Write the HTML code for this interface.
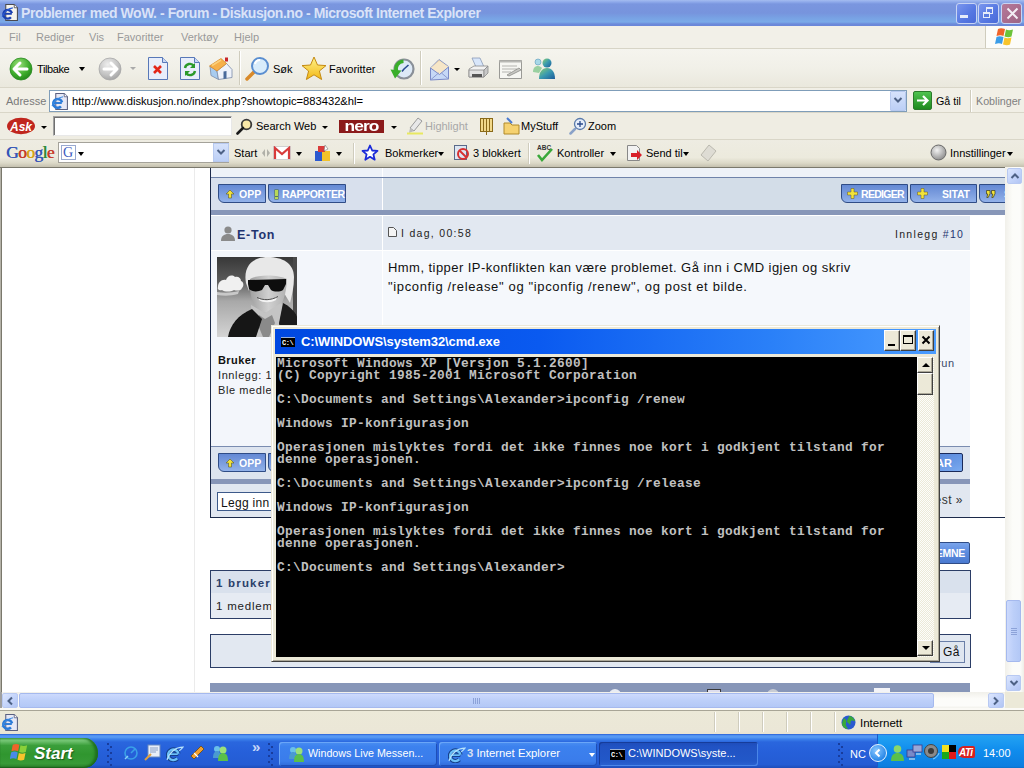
<!DOCTYPE html>
<html><head><meta charset="utf-8">
<style>
*{margin:0;padding:0;box-sizing:border-box}
html,body{width:1024px;height:768px;overflow:hidden;background:#fff;font-family:"Liberation Sans",sans-serif;font-size:11px;color:#000}
.a{position:absolute}
.t{position:absolute;white-space:nowrap;line-height:1}
/* title bar */
#title{left:0;top:0;width:1024px;height:26px;background:linear-gradient(#a4bcf0 0,#8ea9ea 2px,#7a96df 4px,#7794dd 13px,#78a2e4 18px,#7aaae8 22px,#6c8ada 24px,#6a86d8 26px)}
#menu{left:0;top:26px;width:1024px;height:23px;background:#f2f0e8;border-bottom:1px solid #d7d4c6}
#tool{left:0;top:49px;width:1024px;height:39px;background:linear-gradient(#f5f4ee,#f1f0e8 50%,#eae8dd);border-bottom:1px solid #d9d6c8}
#addr{left:0;top:88px;width:1024px;height:25px;background:#f1efe6;border-bottom:1px solid #d9d6c8}
#ask{left:0;top:113px;width:1024px;height:27px;background:#efede3;border-bottom:1px solid #d9d6c8}
#goog{left:0;top:140px;width:1024px;height:27px;background:linear-gradient(#eeece2 0,#eceadd 65%,#dcd9c8 85%,#c4c0ae 100%)}
#page{left:0;top:167px;width:1005px;height:525px;background:#fff;overflow:hidden}
#vs{left:1005px;top:167px;width:19px;height:525px;background:#f5f4ef}
#hs{left:0;top:692px;width:1005px;height:17px;background:#f5f4ef}
#status{left:0;top:709px;width:1024px;height:25px;background:#ece9d8}
#task{left:0;top:734px;width:1024px;height:34px;background:linear-gradient(#3168d5 0,#4993e6 2px,#2157d7 5px,#2663e0 50%,#1941a5 100%)}
#cmd{left:271px;top:325px;width:669px;height:337px;background:#ece9d8}
</style></head><body>
<svg width="0" height="0" style="position:absolute">
 <defs>
  <symbol id="iep" viewBox="0 0 17 17">
   <path d="M4.5 1.5h8l3 3v12h-11z" fill="#f6f4ee" stroke="#4a4a50" stroke-width="1"/>
   <path d="M12.5 1.5v3h3" fill="#fff" stroke="#4a4a50" stroke-width="0.8"/>
   <path d="M2.6 10.2h7.6" stroke="#1a3fb0" stroke-width="1.8"/>
   <path d="M10.3 9.6A4.1 4.1 0 1 0 9.4 13.4" fill="none" stroke="#1a3fb0" stroke-width="2.2"/>
   <path d="M1.2 13.2c1-4 5-8 10-8.6" fill="none" stroke="#2a5ad0" stroke-width="1"/>
  </symbol>
  <symbol id="iea" viewBox="0 0 17 17">
   <path d="M4.5 1.5h8l3 3v12h-11z" fill="#e6e8f6" stroke="#5a6080" stroke-width="1"/>
   <path d="M12.5 1.5v3h3" fill="#fff" stroke="#5a6080" stroke-width="0.8"/>
   <path d="M2.4 10.4h7.8" stroke="#2a7ad8" stroke-width="1.8"/>
   <path d="M10.4 9.8A4.2 4.2 0 1 0 9.4 13.6" fill="none" stroke="#2a7ad8" stroke-width="2.4"/>
   <path d="M1 13.4c1-4 5-8.4 10.4-9" fill="none" stroke="#3a8ae0" stroke-width="1"/>
  </symbol>
  <symbol id="ieb" viewBox="0 0 17 17">
   <path d="M3 9.6h8.6" stroke="#17408a" stroke-width="3.4"/>
   <path d="M11.8 9.2A5 5 0 1 0 10.6 13.6" fill="none" stroke="#17408a" stroke-width="4.2"/>
   <path d="M3.5 9.6h7.6" stroke="#6cc0f8" stroke-width="1.6"/>
   <path d="M11.8 9.2A5 5 0 1 0 10.6 13.6" fill="none" stroke="#6cc0f8" stroke-width="2.2"/>
   <path d="M1 15c2-7 8-12 15-12-1 1-2 2.5-3.5 3.5" fill="none" stroke="#b8e4fc" stroke-width="1.1"/>
  </symbol>
 </defs>
</svg>


<!-- TITLE BAR -->
<div id="title" class="a">
 <svg class="a" style="left:1px;top:3px" width="18" height="18"><use href="#iep"/></svg>
 <div class="t" style="left:21px;top:5px;font:bold 14px 'Liberation Sans',sans-serif;color:#d9e3f8;letter-spacing:-0.45px">Problemer med WoW. - Forum - Diskusjon.no - Microsoft Internet Explorer</div>
 <div class="a tb" style="left:956px;top:3px"><div class="a" style="left:3px;top:11px;width:8px;height:3px;background:#e6ecfa"></div></div>
 <div class="a tb" style="left:978px;top:3px"><div class="a" style="left:7px;top:3px;width:7px;height:7px;border:1px solid #e6ecfa;border-top-width:2px"></div><div class="a" style="left:4px;top:8px;width:7px;height:6px;border:1px solid #e6ecfa;border-top-width:2px;background:#5b7de0"></div></div>
 <div class="a tb" style="left:1001px;top:3px;background:linear-gradient(135deg,#b57a9a,#a86b8c 60%,#9a6785)"><svg class="a" style="left:3px;top:2px" width="15" height="15"><path d="M2.5 2.5L12.5 12.5M12.5 2.5L2.5 12.5" stroke="#f3eef5" stroke-width="2"/></svg></div>
</div>
<style>
.tb{width:21px;height:21px;border:1px solid #c8d4f4;border-radius:3px;background:linear-gradient(135deg,#7a96ee,#5577e2 60%,#4a6ad8)}
.mi{position:absolute;top:32px;color:#999;font-size:11px;line-height:1;white-space:nowrap}
.tl{position:absolute;font-size:11px;line-height:1;white-space:nowrap;color:#000}
.sep{position:absolute;width:2px;border-left:1px solid #cfccbd;border-right:1px solid #fff}
.dd{position:absolute;width:0;height:0;border-left:3px solid transparent;border-right:3px solid transparent;border-top:3px solid #000}
</style>
<!-- MENU -->
<div id="menu" class="a">
 <div class="a" style="left:985px;top:0;width:39px;height:22px;background:#fcfcf9;border-left:1px solid #cfccbd"></div>
 <svg class="a" style="left:995px;top:1px" width="24" height="19" viewBox="0 0 24 19">
  <path d="M3 2c2-1 4-1 7 0l-1.5 7c-2-1-4-1-7 0z" fill="#f0642a"/>
  <path d="M11 2.5c2 1 4 1 7 0l-1.5 7c-2 1-4 1-7 0z" fill="#6cc33a"/>
  <path d="M1.5 10c2-1 4-1 7 0l-1.5 7c-2-1-4-1-7 0z" fill="#3b9de8"/>
  <path d="M9.5 10.5c2 1 4 1 7 0l-1.5 7c-2 1-4 1-7 0z" fill="#f8c42c"/>
 </svg>
</div>
<div class="mi" style="left:9px">Fil</div>
<div class="mi" style="left:36px">Rediger</div>
<div class="mi" style="left:89px">Vis</div>
<div class="mi" style="left:117px">Favoritter</div>
<div class="mi" style="left:181px">Verktøy</div>
<div class="mi" style="left:234px">Hjelp</div>

<!-- TOOLBAR -->
<div id="tool" class="a"></div>
<svg class="a" style="left:9px;top:57px" width="24" height="24" viewBox="0 0 24 24">
 <defs><radialGradient id="gb" cx="0.4" cy="0.3" r="0.8"><stop offset="0" stop-color="#9be07a"/><stop offset="0.6" stop-color="#3cab2a"/><stop offset="1" stop-color="#1d7d17"/></radialGradient>
 <radialGradient id="gg" cx="0.4" cy="0.3" r="0.8"><stop offset="0" stop-color="#eeeeee"/><stop offset="0.6" stop-color="#c2c2c2"/><stop offset="1" stop-color="#9a9a9a"/></radialGradient></defs>
 <circle cx="12" cy="12" r="11" fill="url(#gb)" stroke="#2a8a22" stroke-width="0.8"/>
 <path d="M11 6L5 12l6 6M5.5 12H18" fill="none" stroke="#fff" stroke-width="3" stroke-linecap="round" stroke-linejoin="round"/>
</svg>
<div class="tl" style="left:37px;top:64px;font-size:11px;letter-spacing:-0.4px">Tilbake</div>
<div class="dd" style="left:79px;top:67px;border-width:4px 3.5px 0"></div>
<svg class="a" style="left:98px;top:57px" width="24" height="24" viewBox="0 0 24 24">
 <circle cx="12" cy="12" r="11" fill="url(#gg)" stroke="#a8a8a8" stroke-width="0.8"/>
 <path d="M13 6l6 6-6 6M18.5 12H6" fill="none" stroke="#fff" stroke-width="3" stroke-linecap="round" stroke-linejoin="round"/>
</svg>
<div class="dd" style="left:130px;top:67px;border-top-color:#aaa"></div>
<svg class="a" style="left:147px;top:56px" width="22" height="25" viewBox="0 0 22 25">
 <path d="M1.5 1.5h14l5 5v17h-19z" fill="#e8eefb" stroke="#5878b8"/>
 <path d="M15.5 1.5v5h5" fill="#c8d6f2" stroke="#5878b8"/>
 <path d="M7 10l7 7M14 10l-7 7" stroke="#e32619" stroke-width="2.6"/>
</svg>
<svg class="a" style="left:179px;top:56px" width="22" height="25" viewBox="0 0 22 25">
 <path d="M1.5 1.5h14l5 5v17h-19z" fill="#e8eefb" stroke="#5878b8"/>
 <path d="M15.5 1.5v5h5" fill="#c8d6f2" stroke="#5878b8"/>
 <path d="M6 12a5 5 0 0 1 9-2" fill="none" stroke="#2b9a2b" stroke-width="2.4"/><path d="M16 7v5h-5z" fill="#2b9a2b"/>
 <path d="M16 15a5 5 0 0 1-9 2" fill="none" stroke="#2b9a2b" stroke-width="2.4"/><path d="M6 20v-5h5z" fill="#2b9a2b"/>
</svg>
<svg class="a" style="left:208px;top:56px" width="26" height="25" viewBox="0 0 26 25">
 <path d="M2 10L9 15 10.5 23.5 3 19.5z" fill="#a8ccf0" stroke="#7a8aa8" stroke-width="0.8"/>
 <path d="M9 15L18.5 7.5 24 13.5v8l-13.5 2z" fill="#eef2fa" stroke="#7a8aa8" stroke-width="0.8"/>
 <path d="M1.5 10L13 2.5l5.5 5L9 15z" fill="#f6b04a" stroke="#d88a2a" stroke-width="0.8"/>
 <path d="M4 9.5L13 4" stroke="#fcd07a" stroke-width="1.5"/>
 <path d="M15.5 15.5l3-0.5v7.5l-3 0.5z" fill="#4a6a9a"/>
 <rect x="17" y="1.5" width="3" height="4" fill="#c8262a"/>
</svg>
<div class="sep" style="left:239px;top:51px;height:34px"></div>
<svg class="a" style="left:245px;top:56px" width="26" height="26" viewBox="0 0 26 26">
 <path d="M9 16L2 23" stroke="#d98a2b" stroke-width="3.5" stroke-linecap="round"/>
 <circle cx="15" cy="10" r="8" fill="#d8ecfb" stroke="#5a8ed0" stroke-width="2"/>
 <path d="M10 8a5 5 0 0 1 5-4" fill="none" stroke="#fff" stroke-width="2"/>
</svg>
<div class="tl" style="left:273px;top:64px;font-size:11px">Søk</div>
<svg class="a" style="left:301px;top:56px" width="26" height="25" viewBox="0 0 26 25">
 <defs><linearGradient id="st" x1="0" y1="0" x2="0" y2="1"><stop offset="0" stop-color="#fff38a"/><stop offset="1" stop-color="#f2b715"/></linearGradient></defs>
 <path d="M13 1l3.5 8 8.5.6-6.6 5.4 2.2 8.5L13 18.8 5.4 23.5l2.2-8.5L1 9.6 9.5 9z" fill="url(#st)" stroke="#c48a12" stroke-width="1"/>
</svg>
<div class="tl" style="left:329px;top:64px;font-size:11px">Favoritter</div>
<svg class="a" style="left:389px;top:57px" width="26" height="24" viewBox="0 0 26 24">
 <circle cx="15" cy="12" r="9.5" fill="#dde9f6" stroke="#8a9098" stroke-width="2.2"/>
 <path d="M15 12l4.5-4M15 12l-2 2.5" stroke="#2a4a90" stroke-width="1.6"/>
 <path d="M14.5 4.2A8 8 0 0 0 7.5 15" fill="none" stroke="#3aae2a" stroke-width="3.6"/>
 <path d="M1.5 12.5l11 1-6.5 8z" fill="#3aae2a"/>
</svg>
<div class="sep" style="left:420px;top:51px;height:34px"></div>
<svg class="a" style="left:428px;top:57px" width="24" height="24" viewBox="0 0 24 24">
 <path d="M2.5 11L11 2.5 20.5 9.5" fill="#f8d9a8" stroke="#8a9ac8" stroke-width="1"/>
 <path d="M2.5 11l9-7 9 6v12h-18z" fill="#f6e6c8"/>
 <path d="M2.5 11l9 6.5 9-7.5V22l-18 1z" fill="#c6d8f6" stroke="#7a8ac8" stroke-width="1"/>
 <path d="M2.5 23l8-7M20.5 22l-7-6" stroke="#8a9ad0" stroke-width="1"/>
</svg>
<div class="dd" style="left:454px;top:68px"></div>
<svg class="a" style="left:466px;top:56px" width="26" height="25" viewBox="0 0 26 25">
 <path d="M6 2h8l4 9H10z" fill="#d8e6fa" stroke="#8a9ab8" stroke-width="0.8"/>
 <path d="M3 13l5-3h14l-4 4v7H3z" fill="#f2f2f2" stroke="#8a8a8a" stroke-width="0.8"/>
 <path d="M3 14h15v7H3z" fill="#e2e2e2" stroke="#8a8a8a" stroke-width="0.8"/>
 <path d="M18 14l4-4v7l-4 4z" fill="#c8c8c8" stroke="#8a8a8a" stroke-width="0.8"/>
 <path d="M6 18h10v3H6z" fill="#555"/>
</svg>
<svg class="a" style="left:498px;top:57px" width="26" height="24" viewBox="0 0 26 24">
 <path d="M1.5 3.5h22v18h-22z" fill="#f6f6f2" stroke="#9a9a96"/>
 <path d="M1.5 3.5h22v2h-22z" fill="#b8b8b4"/>
 <path d="M4 9h15M4 12h15M4 15h9" stroke="#b4b4b0"/>
 <path d="M9 18l12-7 2 2-12 6z" fill="#c8c8c4" stroke="#8a8a86" stroke-width="0.8"/>
</svg>
<svg class="a" style="left:531px;top:56px" width="26" height="25" viewBox="0 0 26 25">
 <defs><linearGradient id="msn" x1="0" y1="0" x2="1" y2="1"><stop offset="0" stop-color="#8ad070"/><stop offset="0.5" stop-color="#3a9ab0"/><stop offset="1" stop-color="#1a5a9a"/></linearGradient></defs>
 <circle cx="7" cy="6" r="3" fill="#a8d8e8" stroke="#5a9ab8" stroke-width="0.6"/>
 <path d="M2 16c0-4 2-6 5-6 2 0 3 1 4 2l-3 5z" fill="#9ad0a0"/>
 <circle cx="16" cy="7" r="4.5" fill="url(#msn)"/>
 <path d="M8 23c0-7 3-11 8-11s8 4 8 11z" fill="url(#msn)"/>
</svg>

<!-- ADDRESS -->
<div id="addr" class="a"></div>
<div class="tl" style="left:6px;top:96px;color:#7a7a7a">Adresse</div>
<div class="a" style="left:49px;top:90px;width:858px;height:22px;background:#fff;border:1px solid #7f9db9"></div>
<svg class="a" style="left:51px;top:92px" width="18" height="18"><use href="#iea"/></svg>
<div class="tl" style="left:72px;top:96px;font-size:11.2px">http://www.diskusjon.no/index.php?showtopic=883432&amp;hl=</div>
<div class="a" style="left:890px;top:91px;width:16px;height:20px;background:linear-gradient(#d6e2fb,#bccff6);border:1px solid #b7c9ef;border-radius:1px"></div>
<svg class="a" style="left:893px;top:96px" width="10" height="8"><path d="M1.5 2l3.5 3.5L8.5 2" fill="none" stroke="#4d6185" stroke-width="2"/></svg>
<div class="a" style="left:913px;top:91px;width:19px;height:19px;border-radius:2px;background:linear-gradient(#4fc24f,#1e8a1e);border:1px solid #2a7a2a"></div>
<svg class="a" style="left:915px;top:93px" width="15" height="15"><path d="M2 7.5h10M8 3l4.5 4.5L8 12" fill="none" stroke="#fff" stroke-width="2.2"/></svg>
<div class="tl" style="left:936px;top:96px;font-size:10.7px">Gå til</div>
<div class="sep" style="left:970px;top:90px;height:22px"></div>
<div class="tl" style="left:976px;top:96px;color:#808080;font-size:10.7px">Koblinger</div>

<!-- ASK -->
<div id="ask" class="a"></div>
<svg class="a" style="left:6px;top:117px" width="30" height="18" viewBox="0 0 30 18">
 <ellipse cx="15" cy="9" rx="14" ry="8.2" fill="#c0261e"/>
 <text x="15" y="13.5" text-anchor="middle" font-family="Liberation Sans" font-weight="bold" font-style="italic" font-size="12" fill="#fff">Ask</text>
</svg>
<div class="dd" style="left:41px;top:126px"></div>
<div class="a" style="left:53px;top:116px;width:179px;height:20px;background:#fff;border:1px solid #a0a0a0;border-right-color:#e8e8e8;border-bottom-color:#e8e8e8;box-shadow:inset 1px 1px 0 #707070"></div>
<svg class="a" style="left:236px;top:118px" width="17" height="17" viewBox="0 0 17 17">
 <circle cx="10.5" cy="6.5" r="4.8" fill="#f8e8a8" stroke="#3a3a3a" stroke-width="1.8"/>
 <path d="M7 10l-5.5 5.5" stroke="#1a1a1a" stroke-width="2.6" stroke-linecap="round"/>
</svg>
<div class="tl" style="left:256px;top:121px">Search Web</div>
<div class="dd" style="left:322px;top:126px"></div>
<div class="a" style="left:339px;top:120px;width:45px;height:13px;background:#8b1a1a"></div>
<div class="t" style="left:339px;top:117px;width:45px;text-align:center;font:bold 15.5px 'Liberation Sans',sans-serif;color:#fff;letter-spacing:-0.8px;transform:scaleX(1.12)">nero</div>
<div class="dd" style="left:391px;top:126px"></div>
<svg class="a" style="left:406px;top:117px" width="18" height="18" viewBox="0 0 18 18">
 <path d="M12 1l4 3-8 10-4-3z" fill="#e8e8e8" stroke="#9a9a9a"/>
 <path d="M4 11l4 3-5 2z" fill="#bbb"/>
 <path d="M1 16.5h16" stroke="#e8e860" stroke-width="2"/>
</svg>
<div class="tl" style="left:425px;top:121px;color:#a8a8a8">Highlight</div>
<svg class="a" style="left:479px;top:117px" width="15" height="19" viewBox="0 0 15 19">
 <rect x="1.5" y="1.5" width="12" height="13" fill="#f2d98a" stroke="#8a6a1a"/>
 <path d="M4.5 2v12M7.5 2v12M10.5 2v12" stroke="#8a6a1a"/>
 <path d="M7.5 15v3" stroke="#8a6a1a"/>
</svg>
<svg class="a" style="left:503px;top:117px" width="17" height="18" viewBox="0 0 17 18">
 <path d="M1 6h6l2 2h7v9H1z" fill="#f6d270" stroke="#b08a2a"/>
 <path d="M4 1l5 5" stroke="#4a7ad0" stroke-width="2"/>
</svg>
<div class="tl" style="left:521px;top:121px">MyStuff</div>
<svg class="a" style="left:569px;top:117px" width="18" height="18" viewBox="0 0 18 18">
 <path d="M6 12L1.5 16.5" stroke="#8aa2c8" stroke-width="2.5" stroke-linecap="round"/>
 <circle cx="11" cy="7" r="5.5" fill="#e6eefa" stroke="#5a7aaa" stroke-width="1.3"/>
 <path d="M11 4v6M8 7h6" stroke="#2a4a8a" stroke-width="1.3"/>
</svg>
<div class="tl" style="left:588px;top:121px">Zoom</div>

<!-- GOOGLE -->
<div id="goog" class="a"></div>
<div class="t" style="left:6px;top:142px;font:17.5px 'Liberation Serif',serif;letter-spacing:-0.6px;text-shadow:0.5px 0 0 currentColor"><span style="color:#3556b8">G</span><span style="color:#c63c2c">o</span><span style="color:#d6a418">o</span><span style="color:#3556b8">g</span><span style="color:#2a8a3a">l</span><span style="color:#c63c2c">e</span></div>
<div class="a" style="left:58px;top:142px;width:171px;height:21px;background:#fff;border:1px solid #a4a29a"></div>
<div class="a" style="left:61px;top:145px;width:15px;height:15px;background:#fff;border:1px solid #9aaad0"></div>
<div class="t" style="left:63px;top:145px;font:14px 'Liberation Serif',serif;color:#3a5ac0">G</div>
<div class="dd" style="left:78px;top:152px;border-width:4px 3.5px 0"></div>
<div class="a" style="left:213px;top:143px;width:16px;height:19px;background:linear-gradient(#d6e2fb,#bccff6);border:1px solid #b7c9ef"></div>
<svg class="a" style="left:216px;top:148px" width="10" height="8"><path d="M1.5 2l3.5 3.5L8.5 2" fill="none" stroke="#4d6185" stroke-width="2"/></svg>
<div class="tl" style="left:234px;top:148px">Start</div>
<svg class="a" style="left:261px;top:148px" width="10" height="10"><path d="M4 1L1 5l3 4M6 1l3 4-3 4" fill="#b0b0a8"/></svg>
<svg class="a" style="left:273px;top:146px" width="18" height="14" viewBox="0 0 18 14">
 <rect x="0.5" y="0.5" width="17" height="13" fill="#fff" stroke="#d0d0d0"/>
 <path d="M2 13V2l7 6 7-6v11" fill="none" stroke="#d83b3b" stroke-width="2.2"/>
</svg>
<div class="dd" style="left:296px;top:152px;border-width:4px 3.5px 0"></div>
<svg class="a" style="left:314px;top:144px" width="17" height="18" viewBox="0 0 17 18">
 <rect x="1" y="7" width="7" height="10" fill="#2c5ad0"/><rect x="8" y="7" width="8" height="10" fill="#f2c22a"/>
 <rect x="4" y="2" width="7" height="6" fill="#d83b3b"/><path d="M11 1l3 4-4 2z" fill="#fff" stroke="#777" stroke-width="0.6"/>
</svg>
<div class="dd" style="left:336px;top:152px;border-width:4px 3.5px 0"></div>
<div class="sep" style="left:353px;top:143px;height:21px"></div>
<svg class="a" style="left:361px;top:144px" width="18" height="18" viewBox="0 0 18 18">
 <path d="M9 1.5l2.2 5 5.3.4-4.1 3.5 1.3 5.3L9 12.8l-4.7 2.9 1.3-5.3L1.5 6.9l5.3-.4z" fill="#fff" stroke="#1a2ad8" stroke-width="1.8" stroke-linejoin="round"/>
</svg>
<div class="tl" style="left:385px;top:148px">Bokmerker</div>
<div class="dd" style="left:438px;top:152px;border-width:4px 3.5px 0"></div>
<svg class="a" style="left:453px;top:144px" width="18" height="18" viewBox="0 0 18 18">
 <rect x="1.5" y="1.5" width="12" height="14" fill="#dde6f2" stroke="#5a6a8a"/>
 <circle cx="10" cy="10" r="5" fill="none" stroke="#d83030" stroke-width="2"/><path d="M6.5 6.5l7 7" stroke="#d83030" stroke-width="2"/>
</svg>
<div class="tl" style="left:473px;top:148px">3 blokkert</div>
<div class="sep" style="left:528px;top:143px;height:21px"></div>
<svg class="a" style="left:536px;top:143px" width="18" height="19" viewBox="0 0 18 19">
 <text x="1" y="7" font-family="Liberation Sans" font-size="6.5" font-weight="bold" fill="#333">ABC</text>
 <path d="M2 12l4 5 10-11" fill="none" stroke="#3aa83a" stroke-width="2.6"/>
</svg>
<div class="tl" style="left:557px;top:148px">Kontroller</div>
<div class="dd" style="left:610px;top:152px;border-width:4px 3.5px 0"></div>
<svg class="a" style="left:626px;top:144px" width="18" height="18" viewBox="0 0 18 18">
 <path d="M1.5 1.5h9l3 3v12h-12z" fill="#f2f2f2" stroke="#888"/>
 <path d="M5 9h6V6l5 5-5 5v-3H5z" fill="#d8202a"/>
</svg>
<div class="tl" style="left:646px;top:148px">Send til</div>
<div class="dd" style="left:683px;top:152px;border-width:4px 3.5px 0"></div>
<svg class="a" style="left:700px;top:144px" width="17" height="18" viewBox="0 0 17 18">
 <path d="M9 1l7 6-8 10-7-6z" fill="#dedcd4" stroke="#bab8ae"/>
</svg>
<svg class="a" style="left:930px;top:144px" width="17" height="17" viewBox="0 0 17 17">
 <defs><radialGradient id="gr" cx="0.4" cy="0.35" r="0.7"><stop offset="0" stop-color="#f2f2f2"/><stop offset="1" stop-color="#8a8a8a"/></radialGradient></defs>
 <circle cx="8.5" cy="8.5" r="7.5" fill="url(#gr)" stroke="#6a6a6a"/>
</svg>
<div class="tl" style="left:950px;top:148px">Innstillinger</div>
<div class="dd" style="left:1007px;top:152px;border-width:4px 3.5px 0"></div>

<!-- PAGE -->
<style>
.pg{position:absolute;left:0;top:167px;width:1005px;height:525px;overflow:hidden;background:#fff}
.p{position:absolute}
.btn{position:absolute;height:19px;border:1px solid #2f4c86;border-radius:0 0 0 6px;background:linear-gradient(#6489d4,#7fa0e0 60%,#92b2ea);color:#fff;font:bold 10.5px 'Liberation Sans',sans-serif;line-height:19px;white-space:nowrap}
.btn2{position:absolute;height:19px;border:1px solid #2f4c86;border-radius:2px;background:linear-gradient(#7aa4ec,#5a8ade 50%,#4a7ad0);color:#fff;font:bold 10px 'Liberation Sans',sans-serif;line-height:17px;white-space:nowrap}
.vt{position:absolute;font-size:11px;line-height:1;white-space:nowrap;letter-spacing:0.6px;color:#222}
</style>
<div class="pg">
 <div class="p" style="left:0;top:0;width:1005px;height:1px;background:#7a786c;z-index:5"></div>
 <div class="p" style="left:0;top:0;width:1px;height:525px;background:#b4b2a8"></div><div class="p" style="left:1px;top:0;width:1px;height:525px;background:#7a786c"></div>
 <div class="p" style="left:194px;top:0;width:1px;height:525px;background:#ebebeb"></div>
 <!-- top row -->
 <div class="p" style="left:210px;top:0;width:795px;height:350px;background:#fff"></div>
 <div class="p" style="left:210px;top:0;width:1px;height:350px;background:#1c2a4a"></div>
 <div class="p" style="left:211px;top:0;width:794px;height:10px;background:#eef2f8"></div>
 <div class="p" style="left:382px;top:0;width:1px;height:43px;background:#fff"></div>
 <div class="p" style="left:211px;top:10px;width:794px;height:1px;background:#6f83aa"></div>
 <div class="p" style="left:211px;top:11px;width:171px;height:32px;background:#d8e0ed"></div>
 <div class="p" style="left:383px;top:11px;width:622px;height:32px;background:#d3dde8"></div>
 <div class="p" style="left:211px;top:43px;width:794px;height:5px;background:#8796b8"></div>
 <div class="btn" style="left:218px;top:17px;width:48px;padding-left:20px">OPP</div>
 <svg class="p" style="left:225px;top:22px" width="10" height="10"><path d="M5 1L1 5h2.5v4h3V5H9z" fill="#f2e23a" stroke="#5a5a2a" stroke-width="0.6"/></svg>
 <div class="btn" style="left:268px;top:17px;width:78px;padding-left:13px;letter-spacing:-0.35px">RAPPORTER</div>
 <div class="p" style="left:275px;top:23px;width:3px;height:6px;background:#b8d858;box-shadow:0 0 0 0.5px #4a6a3a"></div><div class="p" style="left:275px;top:30px;width:3px;height:2px;background:#b8d858;box-shadow:0 0 0 0.5px #4a6a3a"></div>
 <div class="btn" style="left:841px;top:17px;width:67px;padding-left:19px;letter-spacing:-0.7px">REDIGER</div>
 <svg class="p" style="left:847px;top:21px" width="11" height="11"><path d="M4 0.5h3v3.5h3.5v3H7v3.5H4V7H0.5V4H4z" fill="#f2e23a" stroke="#6a5a1a" stroke-width="0.5"/></svg>
 <div class="btn" style="left:910px;top:17px;width:67px;padding-left:31px;letter-spacing:-0.2px">SITAT</div>
 <svg class="p" style="left:917px;top:21px" width="11" height="11"><path d="M4 0.5h3v3.5h3.5v3H7v3.5H4V7H0.5V4H4z" fill="#f2e23a" stroke="#6a5a1a" stroke-width="0.5"/></svg>
 <div class="btn" style="left:979px;top:17px;width:60px;padding-left:24px">SVAR</div>
 <svg class="p" style="left:986px;top:23px" width="10" height="8" viewBox="0 0 10 8"><path d="M0.5 0.5h3.5v3.2L2.2 7.5H0.8L1.8 4H0.5zM5.5 0.5H9v3.2L7.2 7.5H5.8L6.8 4H5.5z" fill="#f2e23a" stroke="#3a3a1a" stroke-width="0.7"/></svg>
 <!-- post header -->
 <div class="p" style="left:211px;top:48px;width:794px;height:1px;background:#fff"></div>
 <div class="p" style="left:211px;top:49px;width:171px;height:34px;background:#e2e8f1"></div>
 <div class="p" style="left:383px;top:49px;width:587px;height:34px;background:#e2e8f1"></div>
 <svg class="p" style="left:220px;top:58px" width="16" height="17" viewBox="0 0 16 17"><circle cx="8" cy="5" r="3.6" fill="#8a8a8a"/><path d="M1 16c0-5 3-7 7-7s7 2 7 7z" fill="#8a8a8a"/></svg>
 <div class="t" style="left:237px;top:61px;font:bold 12.5px 'Liberation Sans',sans-serif;letter-spacing:0.75px;color:#1f3470">E-Ton</div>
 <svg class="p" style="left:388px;top:60px" width="9" height="10"><path d="M0.5 0.5h5l3 3v6h-8z" fill="#f4f4f4" stroke="#555" stroke-width="1"/></svg>
 <div class="vt" style="left:401px;top:61px;font-size:10.5px;letter-spacing:1.3px;color:#222">I dag, 00:58</div>
 <div class="vt" style="left:895px;top:62px;font-size:10.5px;letter-spacing:1.3px;color:#222">Innlegg <span style="color:#1f3470">#10</span></div>
 <!-- post body -->
 <div class="p" style="left:211px;top:83px;width:794px;height:1px;background:#fff"></div>
 <div class="p" style="left:211px;top:84px;width:171px;height:195px;background:#f3f6fb"></div>
 <div class="p" style="left:383px;top:84px;width:587px;height:195px;background:#f5f8fc"></div>
   <svg class="p" style="left:217px;top:90px" width="80" height="80" viewBox="0 0 80 80">
  <defs>
   <linearGradient id="sky" x1="0" y1="0" x2="0" y2="1"><stop offset="0" stop-color="#383838"/><stop offset="0.3" stop-color="#5a5a5a"/><stop offset="0.55" stop-color="#a8a8a8"/><stop offset="1" stop-color="#d4d4d4"/></linearGradient>
   <linearGradient id="face" x1="0" y1="0" x2="1" y2="0"><stop offset="0" stop-color="#a0a0a0"/><stop offset="0.5" stop-color="#d0d0d0"/><stop offset="1" stop-color="#b0b0b0"/></linearGradient>
   <filter id="bl" x="-10%" y="-10%" width="120%" height="120%"><feGaussianBlur stdDeviation="0.7"/></filter>
   <clipPath id="av"><rect width="80" height="80"/></clipPath>
  </defs>
  <g clip-path="url(#av)">
  <rect width="80" height="80" fill="url(#sky)"/>
  <g filter="url(#bl)">
  <path d="M76 0h4v60h-4z" fill="#4a4a4a"/>
  <path d="M1 30c0-5 4-8 8-7 1-4 6-6 9-3 3-1 6 1 6 4 3 1 3 5 1 7-1 3-5 3-8 2-4 2-9 2-12 0-3 1-5-1-4-3z" fill="#f0f0f0"/>
  <path d="M0 35c6 1 14 1 22-1l-1 3c-7 2-14 2-21 1z" fill="#c8c8c8"/>
  <path d="M29 26c-3-16 6-26 22-26 14 0 26 6 26 20 0 10-2 18-4 26l-6-10c0-10-6-14-18-14s-16 4-17 12z" fill="#e8e8e8"/>
  <path d="M33 22c-1 20 4 33 17 34 13-1 19-13 20-34-8-4-28-5-37 0z" fill="url(#face)"/>
  <path d="M31 23l38-1v5l-3 6c-3 2-9 2-12 0l-3-5h-3l-3 5c-4 2-10 2-13-1l-1-5z" fill="#0c0c0c"/>
  <path d="M41 41c5 3 13 3 19-1l-1 3c-5 3-13 3-17 0z" fill="#f4f4f4"/>
  <path d="M40 40.5c6 3 14 3 21-1" stroke="#505050" stroke-width="1" fill="none"/>
  <path d="M34 48l14 8 16-10 10 8 2 26H36z" fill="#c4c4c4"/>
  <path d="M42 58l6 4 7-4 3 8-6 14h-6l-5-12z" fill="#8a8a8a"/>
  <path d="M11 80c2-12 10-22 24-28l10 10-6 18z" fill="#121212"/>
  <path d="M66 46c6 3 12 8 14 14v20H64l-2-14z" fill="#1a1a1a"/>
  </g>
  </g>
 </svg>
 <div class="t" style="left:388px;top:94px;font-size:13px;letter-spacing:0.45px;color:#111">Hmm, tipper IP-konflikten kan være problemet. Gå inn i CMD igjen og skriv</div>
 <div class="t" style="left:388px;top:113px;font-size:13px;letter-spacing:0.65px;color:#111">"ipconfig /release" og "ipconfig /renew", og post et bilde.</div>
 <div class="t" style="left:218px;top:187px;font:bold 11px 'Liberation Sans',sans-serif;letter-spacing:0.4px;color:#111">Bruker</div>
 <div class="vt" style="left:218px;top:203px">Innlegg: 1</div>
 <div class="vt" style="left:218px;top:218px">Ble medlem: 01.01.08</div>
 <div class="vt" style="left:931px;top:191px;color:#3a4a6a">yrun</div>
 <!-- bottom button row -->
 <div class="p" style="left:211px;top:279px;width:759px;height:1px;background:#7a8cb0"></div>
 <div class="p" style="left:211px;top:280px;width:759px;height:32px;background:#dde4ef"></div>
 <div class="btn" style="left:218px;top:286px;width:48px;padding-left:20px">OPP</div>
 <svg class="p" style="left:225px;top:291px" width="10" height="10"><path d="M5 1L1 5h2.5v4h3V5H9z" fill="#f2e23a" stroke="#5a5a2a" stroke-width="0.6"/></svg>
 <div class="btn" style="left:268px;top:286px;width:60px"></div>
 <div class="btn2" style="left:900px;top:286px;width:63px;padding-right:10px;text-align:right;font-size:11px;line-height:19px;border-color:#1a2a5a;background:linear-gradient(160deg,#4a78d0,#6a9ae6 70%,#7aaaf0)">SVAR</div>
 <div class="p" style="left:211px;top:312px;width:759px;height:5px;background:#8796b8"></div>
 <div class="p" style="left:211px;top:317px;width:759px;height:33px;background:#e1e7f0"></div>
 <div class="p" style="left:217px;top:325px;width:120px;height:19px;background:#fff;border:1px solid #3d5a8a"></div>
 <div class="vt" style="left:221px;top:330px;font-size:12px;letter-spacing:0.3px;color:#111">Legg inn</div>
 <div class="vt" style="left:763px;top:327px;width:200px;text-align:right;font-size:12px;letter-spacing:0.5px;color:#333">Eldre emne · Nyest »</div>
 <div class="p" style="left:210px;top:350px;width:795px;height:1px;background:#1c2a4a"></div>
 <!-- EMNE -->
 <div class="btn2" style="left:870px;top:375px;width:100px;height:22px;line-height:20px;padding-right:4px;text-align:right;font-size:10.5px;letter-spacing:-0.3px">NYTT EMNE</div>
 <!-- online box -->
 <div class="p" style="left:210px;top:403px;width:761px;height:49px;border:1px solid #2b3d66;background:#e6ebf3"></div>
 <div class="p" style="left:211px;top:404px;width:759px;height:22px;background:#d9e1ed"></div>
 <div class="t" style="left:216px;top:410px;font:bold 11.5px 'Liberation Sans',sans-serif;letter-spacing:1.2px;color:#2b3f6a">1 bruker leser dette emnet</div>
 <div class="vt" style="left:216px;top:434px;font-size:11.5px;letter-spacing:0.8px">1 medlem</div>
 <!-- go box -->
 <div class="p" style="left:210px;top:467px;width:761px;height:34px;border:1px solid #2b3d66;background:#e2e8f1"></div>
 <div class="p" style="left:930px;top:474px;width:35px;height:22px;border:1px solid #6a7fa8;background:#dfe6f0"></div>
 <div class="vt" style="left:943px;top:479px;font-size:12px;letter-spacing:0.5px;color:#111">Gå</div>
 <!-- bottom bar -->
 <div class="p" style="left:210px;top:516px;width:760px;height:9px;background:#8796b8"></div>
 <div class="p" style="left:609px;top:522px;width:12px;height:6px;border-radius:6px 6px 0 0;background:#e8ecf4"></div>
 <div class="p" style="left:707px;top:522px;width:14px;height:4px;border:1px solid #3a3a3a;border-bottom:none;background:#dde"></div>
 <div class="p" style="left:767px;top:522px;width:12px;height:6px;border-radius:6px 6px 0 0;background:#c8ccd4"></div>
 <div class="p" style="left:874px;top:521px;width:16px;height:4px;background:#f4f4f8"></div>
</div>

<!-- V SCROLL -->
<style>
.sbb{position:absolute;width:15px;height:16px;border:1px solid #b8c9f2;border-radius:2px;background:linear-gradient(135deg,#dce6fd,#c5d5fb 50%,#b2c5f3)}
.sbh{position:absolute;border:1px solid #a5b9ee;border-radius:2px;background:linear-gradient(90deg,#cddafd,#bccff9 50%,#b3c8f6)}
</style>
<div class="a" style="left:1005px;top:167px;width:19px;height:525px;background:linear-gradient(90deg,#f1f0ea,#fcfcf9 40%,#fcfcfa 80%,#eeede6)"></div>
<div class="sbb" style="left:1007px;top:168px"></div>
<svg class="a" style="left:1010px;top:172px" width="10" height="8"><path d="M1.5 6L5 2.5 8.5 6" fill="none" stroke="#4d6185" stroke-width="2"/></svg>
<div class="sbh" style="left:1006px;top:600px;width:15px;height:62px;background:linear-gradient(90deg,#cddafd,#bccff9 50%,#b3c8f6)"></div>
<svg class="a" style="left:1010px;top:627px" width="8" height="8"><path d="M1 1.5h6M1 3.5h6M1 5.5h6M1 7.5h6" stroke="#8ca2d8" stroke-width="1"/></svg>
<div class="sbb" style="left:1006px;top:675px"></div>
<svg class="a" style="left:1009px;top:679px" width="10" height="8"><path d="M1.5 2L5 5.5 8.5 2" fill="none" stroke="#4d6185" stroke-width="2"/></svg>
<!-- H SCROLL -->
<div class="a" style="left:0;top:692px;width:1024px;height:17px;background:linear-gradient(#f1f0ea,#fcfcf9 40%,#fcfcfa 80%,#eeede6)"></div>
<div class="a" style="left:0;top:692px;width:2px;height:17px;background:#a0a0a0"></div>
<div class="a" style="left:1005px;top:692px;width:19px;height:17px;background:#ece9d8"></div>
<div class="sbb" style="left:2px;top:693px;width:16px;height:15px"></div>
<svg class="a" style="left:6px;top:696px" width="8" height="10"><path d="M6 1.5L2.5 5 6 8.5" fill="none" stroke="#4d6185" stroke-width="2"/></svg>
<div class="sbh" style="left:19px;top:693px;width:915px;height:15px;background:linear-gradient(#cddafd,#bccff9 50%,#b3c8f6)"></div>
<svg class="a" style="left:472px;top:697px" width="8" height="8"><path d="M1.5 1v6M3.5 1v6M5.5 1v6M7.5 1v6" stroke="#8ca2d8" stroke-width="1"/></svg>
<div class="sbb" style="left:988px;top:693px;width:16px;height:15px"></div>
<svg class="a" style="left:992px;top:696px" width="8" height="10"><path d="M2 1.5L5.5 5 2 8.5" fill="none" stroke="#4d6185" stroke-width="2"/></svg>
<!-- STATUS -->
<div class="a" style="left:0;top:708px;width:1024px;height:2px;background:#fbfaf6"></div>
<div class="a" style="left:0;top:710px;width:1024px;height:1px;background:#a8a596"></div>
<div class="a" style="left:0;top:711px;width:1024px;height:23px;background:linear-gradient(#ece9d8,#ebe7d7 80%,#e8e3d2)"></div>
<svg class="a" style="left:1px;top:713px" width="18" height="18"><use href="#iea"/></svg>
<div class="sep" style="left:714px;top:712px;height:20px"></div>
<div class="sep" style="left:738px;top:712px;height:20px"></div>
<div class="sep" style="left:762px;top:712px;height:20px"></div>
<div class="sep" style="left:786px;top:712px;height:20px"></div>
<div class="sep" style="left:810px;top:712px;height:20px"></div>
<div class="sep" style="left:834px;top:712px;height:20px"></div>
<svg class="a" style="left:841px;top:715px" width="15" height="15" viewBox="0 0 15 15">
 <circle cx="7.5" cy="7.5" r="7" fill="#2a5ad0"/>
 <path d="M3 3c2 1 3 3 2 5s1 4 2 6c-3 0-5-2-6-4 0-3 1-5 2-7zM8 1c3 0 5 2 6 5-2 0-3-1-4 0s0 3-1 4c-1-2-3-2-3-4s2-3 2-5z" fill="#3aa83a"/>
</svg>
<div class="tl" style="left:860px;top:718px;font-size:11.5px">Internett</div>

<!-- TASKBAR -->
<div class="a" style="left:0;top:734px;width:1024px;height:34px;background:linear-gradient(#1f50c8 0,#4a8cf0 1px,#5a9cf4 3px,#3c82ec 5px,#2a66de 8px,#2660da 50%,#245cd4 90%,#1e4cb8 100%)"></div>
<div class="a" style="left:0;top:738px;width:98px;height:30px;border-radius:0 14px 14px 0/0 15px 15px 0;background:linear-gradient(#5ab85a 0,#78c878 8%,#3a9e3a 25%,#30962f 55%,#379a37 85%,#2a7e2a 100%);box-shadow:inset -3px 0 3px #1e6e1e,inset 0 -1px 1px #1a5a1a"></div>
<svg class="a" style="left:10px;top:743px" width="21" height="20" viewBox="0 0 19 18">
 <path d="M2.5 1.5c2-1 4-1 6 0l-1.2 6c-2-1-4-1-6 0z" fill="#f0642a"/>
 <path d="M9.5 2c2 1 4 1 6 0l-1.2 6c-2 1-4 1-6 0z" fill="#8ad03a"/>
 <path d="M1 8.5c2-1 4-1 6 0l-1.2 6c-2-1-4-1-6 0z" fill="#4a8ae8"/>
 <path d="M8 9c2 1 4 1 6 0l-1.2 6c-2 1-4 1-6 0z" fill="#f8c42c"/>
</svg>
<div class="t" style="left:34px;top:744px;font:bold italic 17px 'Liberation Sans',sans-serif;color:#fff;text-shadow:1px 1px 1px #1a5a1a">Start</div>
<svg class="a" style="left:107px;top:741px" width="6" height="26"><g fill="#183c9c"><rect x="0" y="2" width="2" height="2"/><rect x="3" y="5" width="2" height="2"/><rect x="0" y="8" width="2" height="2"/><rect x="3" y="11" width="2" height="2"/><rect x="0" y="14" width="2" height="2"/><rect x="3" y="17" width="2" height="2"/><rect x="0" y="20" width="2" height="2"/><rect x="3" y="23" width="2" height="2"/></g></svg>
<!-- quick launch -->
<svg class="a" style="left:123px;top:745px" width="16" height="16" viewBox="0 0 16 16"><circle cx="8" cy="8" r="6" fill="none" stroke="#3aa0e8" stroke-width="1.6"/><path d="M8 8l4-4" stroke="#3aa0e8" stroke-width="1.6"/><path d="M2 14l3-3" stroke="#8ad0f8" stroke-width="1.5"/></svg>
<svg class="a" style="left:144px;top:744px" width="17" height="17" viewBox="0 0 17 17"><rect x="4" y="1" width="12" height="12" fill="#e8eef8" stroke="#6a8ac0"/><path d="M6 4h8M6 6h8M6 8h6" stroke="#8aa0c8"/><path d="M1 16l6-6" stroke="#e0a040" stroke-width="2"/></svg>
<svg class="a" style="left:166px;top:744px" width="18" height="18"><use href="#ieb"/></svg>
<svg class="a" style="left:189px;top:744px" width="17" height="17" viewBox="0 0 17 17"><path d="M2 12L12 2l3 3L5 15z" fill="#f0a030" stroke="#6a4a10" stroke-width="0.8"/><path d="M5 9l4 4" stroke="#fff" stroke-width="1.2"/></svg>
<svg class="a" style="left:212px;top:744px" width="17" height="17" viewBox="0 0 17 17"><circle cx="5" cy="5" r="3" fill="#6ac0ea"/><path d="M1 14c0-5 2-7 4-7s4 2 4 7z" fill="#4a9ad0"/><circle cx="11" cy="6" r="3.5" fill="#9ae07a"/><path d="M6 17c0-6 2-8 5-8s5 2 5 8z" fill="#5ac04a"/></svg>
<div class="t" style="left:252px;top:738px;font:bold 15px 'Liberation Sans',sans-serif;color:#c8d8f8;letter-spacing:-1px">»</div>
<svg class="a" style="left:268px;top:741px" width="6" height="26"><g fill="#183c9c"><rect x="0" y="2" width="2" height="2"/><rect x="3" y="5" width="2" height="2"/><rect x="0" y="8" width="2" height="2"/><rect x="3" y="11" width="2" height="2"/><rect x="0" y="14" width="2" height="2"/><rect x="3" y="17" width="2" height="2"/><rect x="0" y="20" width="2" height="2"/><rect x="3" y="23" width="2" height="2"/></g></svg>
<!-- task buttons -->
<div class="a" style="left:279px;top:742px;width:158px;height:24px;border-radius:3px;background:linear-gradient(#4a8ef2,#3c81ee 20%,#3a7ceb 80%,#2f6ad8);box-shadow:inset 1px 1px 0 #6aa6f8,inset -1px -1px 0 #1f4fb8"></div>
<svg class="a" style="left:288px;top:745px" width="17" height="17" viewBox="0 0 17 17"><circle cx="5" cy="5" r="3" fill="#6ac0ea"/><path d="M1 14c0-5 2-7 4-7s4 2 4 7z" fill="#4a9ad0"/><circle cx="11" cy="6" r="3.5" fill="#9ae07a"/><path d="M6 17c0-6 2-8 5-8s5 2 5 8z" fill="#5ac04a"/></svg>
<div class="t" style="left:308px;top:748px;font-size:10.7px;color:#fff">Windows Live Messen...</div>
<div class="a" style="left:439px;top:742px;width:158px;height:24px;border-radius:3px;background:linear-gradient(#4a8ef2,#3c81ee 20%,#3a7ceb 80%,#2f6ad8);box-shadow:inset 1px 1px 0 #6aa6f8,inset -1px -1px 0 #1f4fb8"></div>
<svg class="a" style="left:448px;top:745px" width="18" height="18"><use href="#ieb"/></svg>
<div class="t" style="left:467px;top:748px;font-size:11.3px;color:#fff"><b style="color:#d8e0f0">3</b> Internet Explorer</div>
<div class="a" style="left:589px;top:753px;width:0;height:0;border-left:3.5px solid transparent;border-right:3.5px solid transparent;border-top:4px solid #fff"></div>
<div class="a" style="left:599px;top:742px;width:159px;height:24px;border-radius:3px;background:linear-gradient(#1e4cb8,#2153c4 20%,#2258c8 80%,#2a62d2);box-shadow:inset 1px 1px 0 #163c9a,inset -1px -1px 0 #4a86e8"></div>
<div class="a" style="left:610px;top:749px;width:15px;height:11px;background:#000;border-top:1px solid #9ab0d8"></div>
<div class="t" style="left:611px;top:751px;font:bold 7px 'Liberation Mono',monospace;color:#fff;letter-spacing:-0.5px">C:\</div>
<div class="t" style="left:628px;top:748px;font-size:11px;color:#fff">C:\WINDOWS\syste...</div>
<!-- tray -->
<svg class="a" style="left:838px;top:741px" width="6" height="26"><g fill="#183c9c"><rect x="0" y="2" width="2" height="2"/><rect x="3" y="5" width="2" height="2"/><rect x="0" y="8" width="2" height="2"/><rect x="3" y="11" width="2" height="2"/><rect x="0" y="14" width="2" height="2"/><rect x="3" y="17" width="2" height="2"/><rect x="0" y="20" width="2" height="2"/><rect x="3" y="23" width="2" height="2"/></g></svg>
<div class="t" style="left:850px;top:749px;font-size:11px;color:#fff">NC</div>
<div class="a" style="left:877px;top:734px;width:147px;height:34px;background:linear-gradient(#1c5ad8 0,#2e9aef 1px,#21a0f2 3px,#0f8ced 50%,#0d7ee0 95%,#0b6fc8 100%);border-left:1px solid #1a5ac8"></div>
<div class="a" style="left:869px;top:744px;width:18px;height:18px;border-radius:50%;background:radial-gradient(circle at 40% 35%,#8ac8ff,#2a88e8 70%,#1a6ad0);border:1px solid #e8f4ff"></div>
<svg class="a" style="left:873px;top:748px" width="10" height="10"><path d="M6.5 1.5L3 5l3.5 3.5" fill="none" stroke="#fff" stroke-width="2"/></svg>
<svg class="a" style="left:890px;top:744px" width="15" height="18" viewBox="0 0 15 18"><circle cx="7.5" cy="5" r="3.8" fill="#8ad86a"/><path d="M1 17c0-6 3-8 6.5-8S14 11 14 17z" fill="#5ac04a"/></svg>
<svg class="a" style="left:906px;top:744px" width="17" height="17" viewBox="0 0 17 17"><rect x="1" y="6" width="8" height="7" fill="#7a8ac8" stroke="#3a3a8a" stroke-width="0.8"/><rect x="7" y="1" width="9" height="7" fill="#9aa8d8" stroke="#3a3a8a" stroke-width="0.8"/><path d="M3 15h6M10 10h5" stroke="#eee" stroke-width="1.2"/></svg>
<svg class="a" style="left:923px;top:743px" width="18" height="18" viewBox="0 0 18 18"><circle cx="8" cy="8" r="6.5" fill="#8a8a8a" stroke="#444"/><circle cx="8" cy="8" r="3" fill="#3a3a3a"/><path d="M10 16c3-1 5-3 6-6" stroke="#8ad0f8" stroke-width="1" fill="none"/></svg>
<div class="a" style="left:942px;top:745px;width:7px;height:7px;background:#f0e020"></div>
<div class="a" style="left:949px;top:745px;width:7px;height:7px;background:#000"></div>
<div class="a" style="left:942px;top:752px;width:7px;height:7px;background:#1aa81a"></div>
<div class="a" style="left:949px;top:752px;width:7px;height:7px;background:#e01a1a"></div>
<div class="a" style="left:958px;top:746px;width:17px;height:12px;border-radius:6px 2px 2px 6px;background:#d82020"></div>
<div class="t" style="left:959px;top:747px;font:bold italic 10px 'Liberation Sans',sans-serif;color:#fff;letter-spacing:-0.6px">ATi</div>
<div class="t" style="left:983px;top:748px;font-size:11px;color:#fff">14:00</div>

<!-- CMD -->
<style>
.cb{position:absolute;width:16px;height:21px;background:#ece9d8;border:1px solid;border-color:#fff #404040 #404040 #fff;box-shadow:inset -1px -1px 0 #aca899}
.con{position:absolute;left:277px;top:358px;font:bold 12.8px 'Liberation Mono',monospace;letter-spacing:0.32px;line-height:12px;color:#c0c0c0;white-space:pre}
</style>
<div class="a" style="left:271px;top:325px;width:669px;height:337px;background:#ece9d8;border:1px solid;border-color:#ece9d8 #404040 #404040 #ece9d8;box-shadow:inset 1px 1px 0 #fff,inset -1px -1px 0 #aca899"></div>
<div class="a" style="left:275px;top:329px;width:661px;height:25px;background:linear-gradient(90deg,#0048e0,#0a5af0 40%,#2a80f8 75%,#4a9cff)"></div>
<div class="a" style="left:281px;top:337px;width:14px;height:10px;background:#000;border-top:1px solid #9ab0d8"></div>
<div class="t" style="left:282px;top:339px;font:bold 7px 'Liberation Mono',monospace;color:#fff;letter-spacing:-0.5px">C:\</div>
<div class="t" style="left:301px;top:334px;font:bold 13px 'Liberation Sans',sans-serif;color:#fff;letter-spacing:-0.1px">C:\WINDOWS\system32\cmd.exe</div>
<div class="cb" style="left:884px;top:330px"><div class="a" style="left:3px;top:13px;width:7px;height:2px;background:#000"></div></div>
<div class="cb" style="left:900px;top:330px"><div class="a" style="left:2px;top:4px;width:10px;height:9px;border:1px solid #000;border-top-width:2px"></div></div>
<div class="cb" style="left:918px;top:330px;width:16px"><svg class="a" style="left:2px;top:4px" width="10" height="10"><path d="M1.5 1.5l7 7M8.5 1.5l-7 7" stroke="#000" stroke-width="2"/></svg></div>
<div class="a" style="left:276px;top:357px;width:641px;height:300px;background:#000"></div>
<div class="a" style="left:917px;top:357px;width:17px;height:300px;background:repeating-conic-gradient(#ece9d8 0 25%,#fdfdfb 0 50%) 0 0/2px 2px"></div>
<div class="cb" style="left:917px;top:357px;height:16px"><div class="a" style="left:4px;top:5px;width:0;height:0;border-left:4px solid transparent;border-right:4px solid transparent;border-bottom:4px solid #000"></div></div>
<div class="cb" style="left:917px;top:373px;height:22px"></div>
<div class="cb" style="left:917px;top:640px;height:16px"><div class="a" style="left:4px;top:5px;width:0;height:0;border-left:4px solid transparent;border-right:4px solid transparent;border-top:4px solid #000"></div></div>
<div class="con">Microsoft Windows XP [Versjon 5.1.2600]
(C) Copyright 1985-2001 Microsoft Corporation

C:\Documents and Settings\Alexander>ipconfig /renew

Windows IP-konfigurasjon

Operasjonen mislyktes fordi det ikke finnes noe kort i godkjent tilstand for
denne operasjonen.

C:\Documents and Settings\Alexander>ipconfig /release

Windows IP-konfigurasjon

Operasjonen mislyktes fordi det ikke finnes noe kort i godkjent tilstand for
denne operasjonen.

C:\Documents and Settings\Alexander></div>

</body></html>
